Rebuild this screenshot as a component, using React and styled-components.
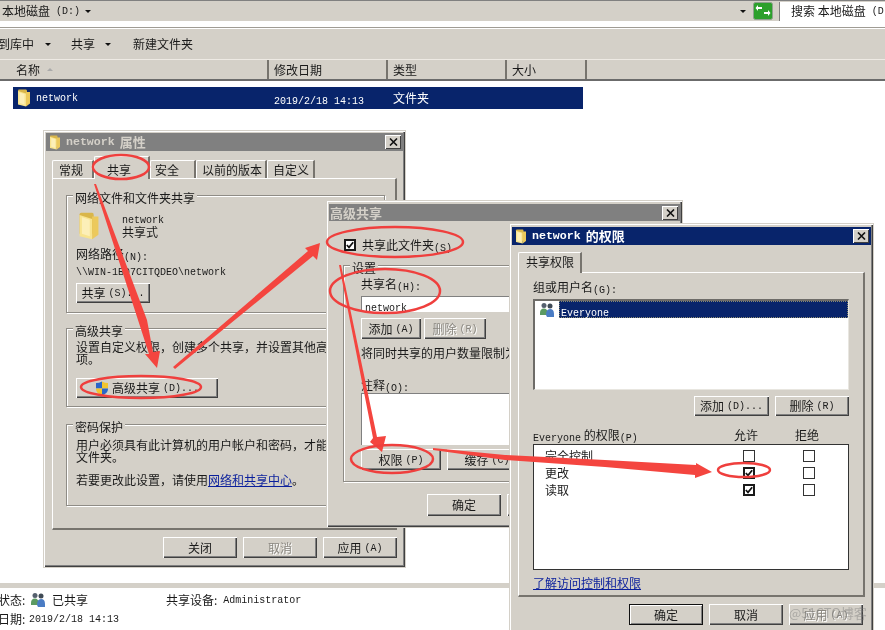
import React from 'react'
import styled, { createGlobalStyle } from 'styled-components'

const GlobalStyle = createGlobalStyle`
    html, body {
        margin: 0;
        padding: 0;
        background: #fff;
    }
    body {
        font-family: "Noto Sans CJK SC", "Liberation Sans", sans-serif;
        font-size: 12px;
        line-height: 12px;
        color: #1a1a1a;
    }
`

const Desktop = styled.div`
    position: relative;
    width: 885px;
    height: 630px;
    overflow: hidden;
    background: #fff;
    filter: blur(0.35px);
`

const Lat = styled.span`
    font-family: "Liberation Mono", "DejaVu Sans Mono", monospace;
    font-size: 10px;
    line-height: 0;
    vertical-align: -1px;
    margin-top: 2px;
`

/* explorer behind the dialogs */
const Explorer = styled.div`
    display: flex;
    flex-direction: column;
    height: 630px;
`

const AddressBar = styled.div`
    display: flex;
    align-items: center;
    height: 20px;
    border-top: 1px solid #808080;
    border-bottom: 1px solid #fff;
    background: #d4d0c8;
    padding-left: 2px;
`

const Caret = styled.i`
    display: inline-block;
    width: 0;
    height: 0;
    margin-left: ${p => p.$ml || 5}px;
    border-left: 3px solid transparent;
    border-right: 3px solid transparent;
    border-top: 3px solid #111;
`

const SortMark = styled(Caret)`
    transform: rotate(180deg);
    border-top-color: #aaa;
`

const AddressRight = styled.div`
    display: flex;
    align-items: center;
    gap: 7px;
    margin-left: auto;
    height: 100%;
`

const SearchBox = styled.div`
    width: 94px;
    height: 19px;
    margin-left: -1px;
    padding-left: 11px;
    background: #fff;
    border-left: 1px solid #808080;
    display: flex;
    align-items: center;
    white-space: nowrap;
    overflow: hidden;
`

const Toolbar = styled.div`
    display: flex;
    align-items: center;
    height: 30px;
    margin-top: 6px;
    background: #d4d0c8;
    border-top: 1px solid #fff;
    box-shadow: 0 -1px #a09c94;
`

const ToolItem = styled.span`
    display: flex;
    align-items: center;
    margin-left: ${p => p.$ml}px;
    white-space: nowrap;
`

const HeaderRow = styled.div`
    display: flex;
    height: 19px;
    background: #d4d0c8;
    border-top: 1px solid #eeeae4;
    border-bottom: 2px solid #6b6b6b;
`

const HeaderCell = styled.div`
    display: flex;
    align-items: center;
    box-sizing: border-box;
    width: ${p => p.$w}px;
    padding-left: ${p => p.$pl}px;
    border-right: ${p => (p.$last ? '0' : '2px solid #77746e')};
`

const FileList = styled.div`
    flex: 1;
    padding: 6px 0 0 13px;
`

const FileRow = styled.div`
    display: flex;
    align-items: center;
    width: 570px;
    height: 22px;
    background: #08246b;
    color: #fff;
`

const FileName = styled.span`
    display: flex;
    align-items: center;
    gap: 5px;
    width: 261px;
    padding-left: 4px;
    box-sizing: border-box;
`

const FileDate = styled.span`
    width: 119px;
`

const StatusBar = styled.div`
    border-top: 5px solid #d4d0c8;
    height: 41px;
    padding: 1px 0 0;
`

const StatusRow = styled.div`
    display: flex;
    align-items: center;
    height: ${p => p.$h}px;
    margin-left: -2px;
`

const StatusKey = styled.span`
    width: ${p => p.$w}px;
    padding-left: ${p => p.$pl || 0}px;
    flex: none;
`

/* window chrome */
const Win = styled.div`
    position: absolute;
    left: ${p => p.$x}px;
    top: ${p => p.$y}px;
    width: ${p => p.$w}px;
    height: ${p => p.$h}px;
    box-sizing: border-box;
    padding: ${p => p.$pt}px 2px 0;
    background: #d4d0c8;
    box-shadow: inset 1px 1px #fff, inset -1px -1px #404040, inset -2px -2px #808080, 0 0 0 1px #d4d0c8;
`

const TitleBar = styled.div`
    display: flex;
    align-items: center;
    height: ${p => p.$h}px;
    padding-left: ${p => p.$pl || 3}px;
    gap: 5px;
    background: ${p => (p.$active ? '#08246b' : '#808080')};
    color: ${p => (p.$active ? '#fff' : '#d4d0c8')};
    font-weight: 700;
    font-size: 13px;
`

const TitleLat = styled.span`
    font-family: "Liberation Mono", monospace;
    font-size: 11.6px;
    font-weight: 700;
`

const CloseBtn = styled.div`
    margin-left: auto;
    margin-right: 2px;
    width: 16px;
    height: 14px;
    background: #d4d0c8;
    box-shadow: inset 1px 1px #fff, inset -1px -1px #404040;
    display: flex;
    align-items: center;
    justify-content: center;
`

const TabStrip = styled.div`
    display: flex;
    align-items: flex-end;
    height: ${p => p.$h || 23}px;
    margin: ${p => p.$mt}px 0 0 ${p => p.$ml}px;
`

const Tab = styled.div`
    box-sizing: border-box;
    width: ${p => p.$w}px;
    height: ${p => (p.$active ? p.$ah || 23 : 18)}px;
    padding: ${p => (p.$active ? p.$apt || 7 : 3)}px 0 0 ${p => p.$pl}px;
    background: #d4d0c8;
    white-space: nowrap;
    border-top: 1px solid #fff;
    border-left: 1px solid #fff;
    border-right: 2px solid #77746e;
    border-top-left-radius: 2px;
    position: relative;
    z-index: ${p => (p.$active ? 2 : 0)};
    margin-bottom: ${p => (p.$active ? -1 : 0)}px;
`

const Panel = styled.div`
    box-sizing: border-box;
    width: ${p => p.$w}px;
    height: ${p => p.$h}px;
    margin-left: 6px;
    padding: ${p => p.$pad};
    border-top: 1px solid #fff;
    border-left: 1px solid #fff;
    border-right: 2px solid #77746e;
    border-bottom: 2px solid #77746e;
`

const Group = styled.div`
    position: relative;
    box-sizing: border-box;
    width: ${p => p.$w}px;
    height: ${p => p.$h}px;
    margin-top: ${p => p.$mt || 0}px;
    margin-left: ${p => p.$ml || 0}px;
    padding: ${p => p.$pad};
    border: 1px solid #8f8c86;
    box-shadow: 1px 1px #fff, inset 1px 1px #fff;
`

const GroupTitle = styled.span`
    position: absolute;
    left: 6px;
    top: -4px;
    padding: 0 2px;
    background: #d4d0c8;
    white-space: nowrap;
`

const Line = styled.div`
    margin-top: ${p => p.$mt || 0}px;
    white-space: nowrap;
`

const Blue = styled.a`
    color: #0a1f9c;
    text-decoration: underline;
`

const Btn = styled.div`
    display: flex;
    align-items: center;
    justify-content: ${p => (p.$left ? 'flex-start' : 'center')};
    gap: 3px;
    box-sizing: border-box;
    flex: none;
    width: ${p => p.$w}px;
    height: ${p => p.$h || 21}px;
    padding-left: ${p => p.$pl || 0}px;
    margin-top: ${p => p.$mt || 0}px;
    background: #d4d0c8;
    white-space: nowrap;
    color: ${p => (p.$off ? '#8a8780' : 'inherit')};
    text-shadow: ${p => (p.$off ? '1px 1px #fff' : 'none')};
    box-shadow: ${p => (p.$main
        ? 'inset 0 0 0 1px #111, inset 2px 2px #fff, inset -2px -2px #808080'
        : 'inset 1px 1px #fff, inset -1px -1px #404040, inset -2px -2px #808080')};
`

const BtnRow = styled.div`
    display: flex;
    gap: ${p => p.$gap || 6}px;
    margin-top: ${p => p.$mt || 0}px;
    margin-left: ${p => p.$ml || 0}px;
    margin-right: ${p => p.$mr || 0}px;
    justify-content: ${p => (p.$end ? 'flex-end' : 'flex-start')};
`

const FolderInfo = styled.div`
    display: flex;
    align-items: flex-start;
    gap: 22px;
    margin-left: 2px;
`

/* share dialog */
const CheckRow = styled.div`
    display: flex;
    align-items: center;
    gap: 6px;
    height: 13px;
    margin: 17px 0 0 15px;
`

const Check = styled.span`
    display: flex;
    align-items: center;
    justify-content: center;
    box-sizing: border-box;
    width: 12px;
    height: 12px;
    background: #fff;
    border: ${p => (p.$thick ? '2px solid #1a1a1a' : '1.5px solid #333')};
`

const Field = styled.div`
    box-sizing: border-box;
    width: ${p => p.$w}px;
    height: ${p => p.$h}px;
    margin-top: ${p => p.$mt}px;
    padding: 2px 0 0 3px;
    background: #fff;
    border-top: 1px solid #808080;
    border-left: 1px solid #808080;
`

/* permissions dialog */
const UserList = styled.div`
    box-sizing: border-box;
    height: 91px;
    margin-top: 6px;
    background: #fff;
    border-top: 2px solid #6e6c68;
    border-left: 2px solid #6e6c68;
    border-right: 1px solid #e8e6e0;
    border-bottom: 1px solid #e8e6e0;
`

const UserRow = styled.div`
    display: flex;
    align-items: center;
    height: 17px;
`

const UserIcon = styled.span`
    display: flex;
    width: 20px;
    padding-left: 4px;
`

const UserName = styled.span`
    flex: 1;
    height: 17px;
    line-height: 17px;
    padding-left: 2px;
    background: #08246b;
    color: #fff;
    outline: 1px dotted #8a8a70;
    outline-offset: -1px;
`

const PermGrid = styled.div`
    display: grid;
    grid-template-columns: 185px 60px 60px;
    align-items: center;
    height: ${p => p.$h}px;
    margin-top: ${p => p.$mt || 0}px;
`

const PermCell = styled.span`
    display: flex;
    justify-content: center;
    margin-left: ${p => p.$ml || 0}px;
`

const PermName = styled.span`
    padding-left: 11px;
`

const PermList = styled.div`
    box-sizing: border-box;
    height: 126px;
    margin-top: 3px;
    padding-top: 2px;
    background: #fff;
    border: 1px solid #333;
`

const Watermark = styled.span`
    position: absolute;
    left: 789px;
    top: 606px;
    font-size: 13px;
    line-height: 14px;
    color: rgba(120, 120, 120, 0.45);
    white-space: nowrap;
    z-index: 5;
`

const Marks = styled.svg`
    position: absolute;
    left: 0;
    top: 0;
    pointer-events: none;
    z-index: 4;
`

const Folder = ({ w = 14, h = 18 }) => (
    <svg width={w} height={h} viewBox="0 0 14 18">
        <path d="M1 1.5 Q1 .5 2 .5 H9 Q10 .5 10 2 V14 H1 Z" fill="#d9b64a" />
        <path d="M1 2 L9 4.5 V17.5 L1 15.5 Z" fill="#f8e48f" />
        <path d="M9 3 H13 V14.5 L9 17.5 Z" fill="#ecc95c" />
        <path d="M2.5 3.5 L7.5 5 V15.5 L2.5 14 Z" fill="#fcefb8" />
    </svg>
)

const Shield = () => (
    <svg width="14" height="15" viewBox="0 0 14 15">
        <path d="M7 .5 Q4 2 1 2 V7.5 H7 Z" fill="#2a66c8" />
        <path d="M7 .5 Q10 2 13 2 V7.5 H7 Z" fill="#f2c52e" />
        <path d="M1 7.5 V8 Q1 12 7 14.5 V7.5 Z" fill="#f2c52e" />
        <path d="M13 7.5 V8 Q13 12 7 14.5 V7.5 Z" fill="#2a66c8" />
    </svg>
)

const Users = ({ size = 16 }) => (
    <svg width={size} height={size} viewBox="0 0 16 16">
        <circle cx="5" cy="3.5" r="2.5" fill="#55606e" />
        <circle cx="11" cy="4" r="2.5" fill="#3f4a55" />
        <path d="M1 11 Q1 6.5 5 6.5 Q8 6.5 8.5 10 V13 H1 Z" fill="#5b9a62" />
        <path d="M7 13 Q7 7 11 7 Q15 7 15 12 V15 H8 Z" fill="#4a7cc4" />
    </svg>
)

const GoButton = () => (
    <svg width="20" height="18" viewBox="0 0 20 18">
        <rect x=".5" y=".5" width="19" height="17" rx="2" fill="#2ca02c" stroke="#8fa08f" />
        <path d="M9 5 L5 5 L5 3 L2.5 6 L5 9 L5 7 L9 7 Z" fill="#fff" />
        <path d="M11 10 L15 10 L15 8 L17.5 11 L15 14 L15 12 L11 12 Z" fill="#fff" />
    </svg>
)

const CloseIcon = () => (
    <svg width="9" height="8" viewBox="0 0 9 8">
        <path d="M1 .5 L8 7.5 M8 .5 L1 7.5" stroke="#111" strokeWidth="1.6" />
    </svg>
)

const Tick = () => (
    <svg width="8" height="8" viewBox="0 0 8 8">
        <path d="M.8 4 L3 6.4 L7.2 1.2" fill="none" stroke="#111" strokeWidth="1.7" />
    </svg>
)

const Annotations = () => (
    <Marks width="885" height="630" viewBox="0 0 885 630">
        <g fill="#f4453f">
            <path d="M94 184 L96 184 L147 320 L153 352 L160 351 L157 368 L145 354 L149 354 L138 320 Z" />
            <path d="M173 367 L308 251 L305 248 L320 243 L317 260 L313 256 L175 369 Z" />
            <path d="M339 265 L341 265 L377 437 L386 436 L382 452 L370 442 L373 438 Z" />
            <path d="M433 448 L505 455 L605 460 L696 465 L696 463 L712 472 L695 478 L695 475 L605 467 L505 460 L433 450 Z" />
        </g>
        <g fill="none" stroke="#ef3f3d" strokeWidth="2.5">
            <ellipse cx="121" cy="167" rx="28" ry="12" />
            <ellipse cx="395" cy="242" rx="68" ry="15" />
            <ellipse cx="385" cy="291" rx="55" ry="22" />
            <ellipse cx="392" cy="459" rx="41" ry="14" />
            <ellipse cx="141" cy="387" rx="60" ry="11" />
            <ellipse cx="744" cy="470" rx="26" ry="7" />
        </g>
    </Marks>
)

const perms = [
    { name: '完全控制', allow: false },
    { name: '更改', allow: true },
    { name: '读取', allow: true },
]

export default function App() {
    return (
        <Desktop>
            <GlobalStyle />
            <Explorer>
                <AddressBar>
                    本地磁盘 <Lat>&nbsp;(D:)</Lat><Caret />
                    <AddressRight>
                        <Caret />
                        <GoButton />
                        <SearchBox>搜索 本地磁盘 <Lat>&nbsp;(D:)</Lat></SearchBox>
                    </AddressRight>
                </AddressBar>
                <Toolbar>
                    <ToolItem $ml={-2}>到库中<Caret $ml={11} /></ToolItem>
                    <ToolItem $ml={20}>共享<Caret $ml={10} /></ToolItem>
                    <ToolItem $ml={22}>新建文件夹</ToolItem>
                </Toolbar>
                <HeaderRow>
                    <HeaderCell $w={269} $pl={16}>名称<SortMark $ml={7} /></HeaderCell>
                    <HeaderCell $w={119} $pl={5}>修改日期</HeaderCell>
                    <HeaderCell $w={119} $pl={5}>类型</HeaderCell>
                    <HeaderCell $w={80} $pl={5}>大小</HeaderCell>
                    <HeaderCell $w={100} $last />
                </HeaderRow>
                <FileList>
                    <FileRow>
                        <FileName><Folder /><Lat>network</Lat></FileName>
                        <FileDate><Lat>2019/2/18 14:13</Lat></FileDate>
                        <span>文件夹</span>
                    </FileRow>
                </FileList>
                <StatusBar>
                    <StatusRow $h={22}>
                        <StatusKey $w={32}>状态:</StatusKey>
                        <Users />
                        <StatusKey $w={114} $pl={6}>已共享</StatusKey>
                        <span>共享设备:</span><Lat>&nbsp;Administrator</Lat>
                    </StatusRow>
                    <StatusRow $h={16}>
                        <StatusKey $w={31}>日期:</StatusKey>
                        <Lat>2019/2/18 14:13</Lat>
                    </StatusRow>
                </StatusBar>
            </Explorer>

            <Win $x={44} $y={131} $w={361} $h={436} $pt={2}>
                <TitleBar $h={18}>
                    <Folder w={12} h={15} />
                    <TitleLat>network</TitleLat> 属性
                    <CloseBtn><CloseIcon /></CloseBtn>
                </TitleBar>
                <TabStrip $mt={4} $ml={6}>
                    <Tab $w={42} $pl={6}>常规</Tab>
                    <Tab $w={56} $pl={12} $active>共享</Tab>
                    <Tab $w={46} $pl={4}>安全</Tab>
                    <Tab $w={71} $pl={5}>以前的版本</Tab>
                    <Tab $w={48} $pl={5}>自定义</Tab>
                </TabStrip>
                <Panel $w={345} $h={352} $pad="16px 13px 0">
                    <Group $w={319} $h={118} $pad="15px 9px 0">
                        <GroupTitle>网络文件和文件夹共享</GroupTitle>
                        <FolderInfo>
                            <Folder w={22} h={30} />
                            <div>
                                <Lat>network</Lat>
                                <Line $mt={3}>共享式</Line>
                            </div>
                        </FolderInfo>
                        <Line $mt={7}>网络路径<Lat>(N):</Lat></Line>
                        <Line $mt={3}><Lat>\\WIN-1B07CITQDEO\network</Lat></Line>
                        <Btn $w={74} $mt={8} $h={20}>共享<Lat>(S)...</Lat></Btn>
                    </Group>
                    <Group $w={319} $h={79} $mt={15} $pad="12px 9px 0">
                        <GroupTitle>高级共享</GroupTitle>
                        <Line>设置自定义权限，创建多个共享，并设置其他高级共享选</Line>
                        <Line>项。</Line>
                        <Btn $w={142} $mt={13} $h={20} $left $pl={19}>
                            <Shield />高级共享<Lat>(D)...</Lat>
                        </Btn>
                    </Group>
                    <Group $w={319} $h={82} $mt={17} $pad="14px 9px 0">
                        <GroupTitle>密码保护</GroupTitle>
                        <Line>用户必须具有此计算机的用户帐户和密码，才能访问共享</Line>
                        <Line>文件夹。</Line>
                        <Line $mt={11}>若要更改此设置，请使用<Blue>网络和共享中心</Blue>。</Line>
                    </Group>
                </Panel>
                <BtnRow $mt={7} $end $mr={6}>
                    <Btn $w={74}>关闭</Btn>
                    <Btn $w={74} $off>取消</Btn>
                    <Btn $w={74}>应用<Lat>(A)</Lat></Btn>
                </BtnRow>
            </Win>

            <Win $x={327} $y={201} $w={355} $h={326} $pt={3}>
                <TitleBar $h={17} $pl={1}>
                    高级共享
                    <CloseBtn><CloseIcon /></CloseBtn>
                </TitleBar>
                <CheckRow>
                    <Check $thick><Tick /></Check>
                    <span>共享此文件夹<Lat>(S)</Lat></span>
                </CheckRow>
                <Group $w={320} $h={217} $mt={14} $ml={14} $pad="12px 17px 0">
                    <GroupTitle>设置</GroupTitle>
                    <Line>共享名<Lat>(H):</Lat></Line>
                    <Field $w={280} $h={16} $mt={6}><Lat>network</Lat></Field>
                    <BtnRow $mt={6} $gap={3}>
                        <Btn $w={60}>添加<Lat>(A)</Lat></Btn>
                        <Btn $w={62} $off>删除<Lat>(R)</Lat></Btn>
                    </BtnRow>
                    <Line $mt={8}>将同时共享的用户数量限制为</Line>
                    <Line $mt={20}>注释<Lat>(O):</Lat></Line>
                    <Field $w={280} $h={52} $mt={2} />
                    <BtnRow $mt={4}>
                        <Btn $w={80}>权限<Lat>(P)</Lat></Btn>
                        <Btn $w={80}>缓存<Lat>(C)</Lat></Btn>
                    </BtnRow>
                </Group>
                <BtnRow $mt={12} $ml={98}>
                    <Btn $w={74} $h={22}>确定</Btn>
                    <Btn $w={74} $h={22}>取消</Btn>
                </BtnRow>
            </Win>

            <Win $x={510} $y={224} $w={363} $h={412} $pt={3}>
                <TitleBar $h={18} $active>
                    <Folder w={12} h={15} />
                    <TitleLat>network</TitleLat> 的权限
                    <CloseBtn><CloseIcon /></CloseBtn>
                </TitleBar>
                <TabStrip $mt={7} $ml={6} $h={20}>
                    <Tab $w={64} $pl={7} $active $ah={21} $apt={3}>共享权限</Tab>
                </TabStrip>
                <Panel $w={347} $h={325} $pad="8px 14px 0">
                    <Line>组或用户名<Lat>(G):</Lat></Line>
                    <UserList>
                        <UserRow>
                            <UserIcon><Users /></UserIcon>
                            <UserName><Lat>Everyone</Lat></UserName>
                        </UserRow>
                    </UserList>
                    <BtnRow $mt={6} $end>
                        <Btn $w={75} $h={20}>添加<Lat>(D)...</Lat></Btn>
                        <Btn $w={74} $h={20}>删除<Lat>(R)</Lat></Btn>
                    </BtnRow>
                    <PermGrid $h={12} $mt={13}>
                        <span><Lat>Everyone</Lat> 的权限<Lat>(P)</Lat></span>
                        <PermCell $ml={-4}>允许</PermCell>
                        <PermCell $ml={-2}>拒绝</PermCell>
                    </PermGrid>
                    <PermList>
                        {perms.map(p => (
                            <PermGrid $h={17} key={p.name}>
                                <PermName>{p.name}</PermName>
                                <PermCell><Check $thick={p.allow}>{p.allow && <Tick />}</Check></PermCell>
                                <PermCell><Check /></PermCell>
                            </PermGrid>
                        ))}
                    </PermList>
                    <Line $mt={7}><Blue>了解访问控制和权限</Blue></Line>
                </Panel>
                <BtnRow $mt={7} $ml={117}>
                    <Btn $w={74} $main>确定</Btn>
                    <Btn $w={74}>取消</Btn>
                    <Btn $w={74} $off>应用<Lat>(A)</Lat></Btn>
                </BtnRow>
            </Win>

            <Annotations />
            <Watermark>@51CTO博客</Watermark>
        </Desktop>
    )
}
